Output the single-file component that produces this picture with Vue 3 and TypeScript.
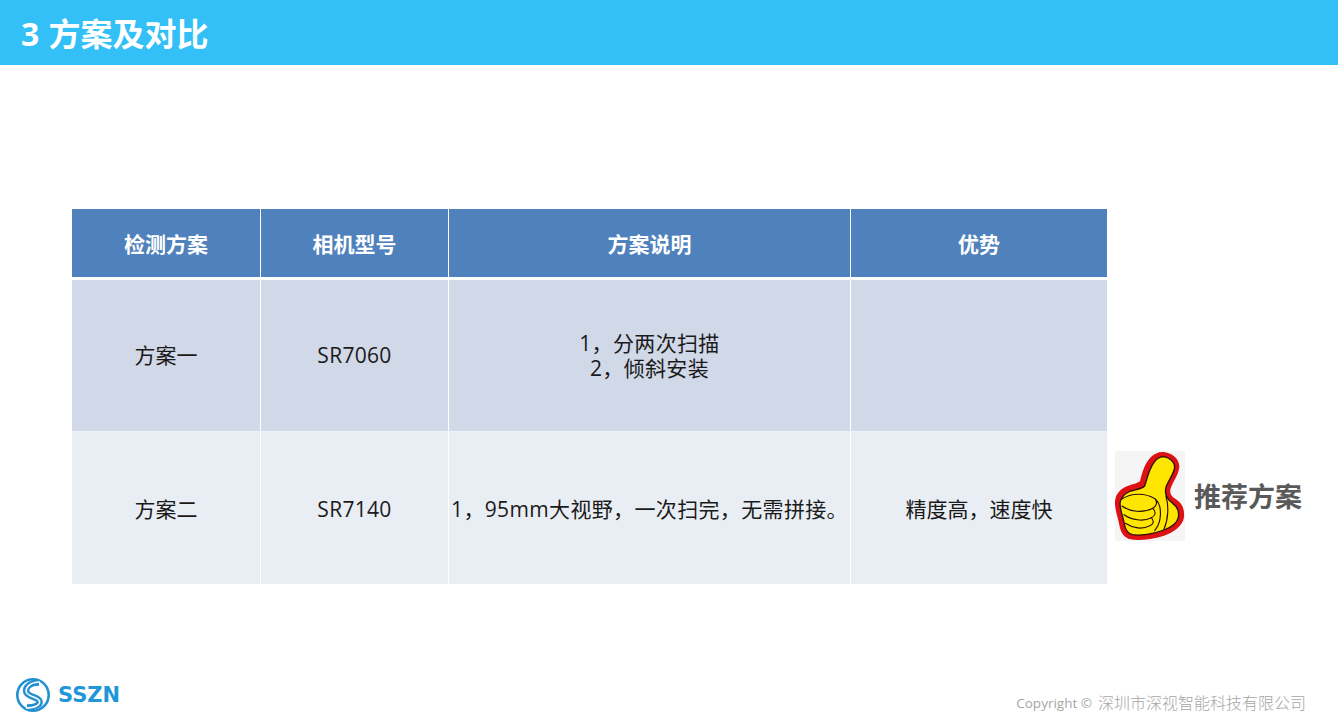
<script setup lang="ts">
interface Row { name: string; model: string; desc: string[]; adv: string; cls: string }
const heads: string[] = ['检测方案', '相机型号', '方案说明', '优势']
const rows: Row[] = [
  { name: '方案一', model: 'SR7060', desc: ['1，分两次扫描', '2，倾斜安装'], adv: '', cls: 'r1' },
  { name: '方案二', model: 'SR7140', desc: ['1，95mm大视野，一次扫完，无需拼接。'], adv: '精度高，速度快', cls: 'r2' },
]
</script>

<template>
  <div class="page">
    <header class="bar"><h1>3 方案及对比</h1></header>
    <main class="main">
      <section class="table">
        <div class="row head">
          <div v-for="h in heads" :key="h" class="cell">{{ h }}</div>
        </div>
        <div v-for="r in rows" :key="r.name" class="row body" :class="r.cls">
          <div class="cell">{{ r.name }}</div>
          <div class="cell model">{{ r.model }}</div>
          <div class="cell desc"><span v-for="d in r.desc" :key="d">{{ d }}</span></div>
          <div class="cell">{{ r.adv }}</div>
        </div>
      </section>
      <aside class="rec">
        <svg class="thumb" width="70" height="90" viewBox="45 33 210 270">
          <rect x="45" y="33" width="210" height="270" fill="#f5f5f5" />
          <path d="M190 36 C215 38 238 55 238 80 C236 105 218 125 212 145 C208 158 212 168 228 178 C248 190 254 210 252 232 C248 258 222 278 190 288 C155 298 115 303 92 298 C72 294 62 278 58 255 C54 232 44 210 45 185 C47 160 62 145 85 137 C98 133 112 130 120 124 C126 100 134 70 152 52 C163 41 176 35 190 36 Z" fill="#dc1214" />
          <path d="M190 50 C208 52 224 65 224 82 C222 102 204 122 198 142 C193 160 198 175 218 190 C232 200 238 215 235 232 C232 250 212 262 192 270 C160 282 120 288 98 284 C84 281 76 270 73 252 C70 232 60 212 60 190 C62 172 75 160 92 153 C108 148 124 148 134 138 C142 115 146 90 160 70 C168 58 178 50 190 50 Z" fill="#ffe600" stroke="#2a0f06" stroke-width="4" />
          <path d="M64 178 C95 158 135 158 165 176 C174 188 168 200 158 205 M66 198 C90 216 130 220 158 205 C170 216 166 228 154 233 M72 224 C95 240 130 246 154 233 C164 244 160 254 148 258 M76 250 C100 266 128 268 148 258 M165 176 C180 190 184 210 180 236 C178 250 172 262 164 272 M198 170 C206 195 206 235 192 268" fill="none" stroke="#2a0f06" stroke-width="3.5" stroke-linecap="round" />
        </svg>
        <strong>推荐方案</strong>
      </aside>
    </main>
    <footer class="foot">
      <div class="logo">
        <svg width="36" height="36" viewBox="0 0 36 36">
          <circle cx="18" cy="18" r="15.7" fill="none" stroke="#2390d2" stroke-width="2.6" />
          <path d="M24 5.5 C15 5.5 9.5 10.5 11.5 15.5 C13.5 20 23 20 24.5 24 C25.5 28 20 30.5 12 30.5" fill="none" stroke="#2390d2" stroke-width="6.4" />
          <path d="M25 5 C15 5 10 10.5 11.5 15.5 C13.5 20 23 20 24.5 24 C25.5 28 20 31 11 31" fill="none" stroke="#fff" stroke-width="1.6" />
        </svg>
        <span>SSZN</span>
      </div>
      <small><span class="lat">Copyright ©</span><span class="cjk">深圳市深视智能科技有限公司</span></small>
    </footer>
  </div>
</template>

<style scoped>
.page {
  width: 1338px;
  height: 720px;
  display: flex;
  flex-direction: column;
  overflow: hidden;
  background: #fff;
  font-family: "Open Sans", "Noto Sans CJK SC", sans-serif;
}
.bar {
  height: 65px;
  flex: none;
  background: #33c0f6;
  display: flex;
  align-items: center;
  padding: 3px 0 0 21px;
  box-sizing: border-box;
}
.bar h1 {
  margin: 0;
  font-size: 32px;
  font-weight: 700;
  line-height: 1;
  color: #fff;
  word-spacing: 1px;
}
.main {
  flex: 1;
  display: flex;
  align-items: flex-start;
  padding: 144px 0 0 72px;
}
.table {
  width: 1035px;
  flex: none;
  display: flex;
  flex-direction: column;
}
.row {
  display: grid;
  grid-template-columns: 188px 188px 402px 257px;
}
.cell {
  display: flex;
  flex-direction: column;
  align-items: center;
  justify-content: center;
  text-align: center;
  border-left: 1px solid #fff;
  color: #1a1a1a;
  font-size: 21px;
  line-height: 25px;
  white-space: nowrap;
}
.cell:first-child { border-left: 0; }
.head {
  height: 68px;
  margin-bottom: 3px;
  background: #4f81bd;
}
.head .cell {
  color: #fff;
  font-weight: 700;
  padding-top: 3px;
}
.body { height: 152px; }
.r1 { background: #d1d8e7; height: 151px; border-bottom: 1px solid #eef1f7; }
.r2 { background: #e9edf4; height: 152px; }
.model { letter-spacing: 0.3px; }
.r1 .model { padding-bottom: 1px; }
.r1 .desc { padding-top: 1px; }
.desc { letter-spacing: 0.35px; }
.r2 .cell { padding-top: 2px; }
.rec {
  margin: 242px 0 0 8px;
  display: flex;
  align-items: center;
  gap: 9px;
}
.thumb { display: block; flex: none; }
.rec strong {
  font-size: 27px;
  line-height: 1;
  font-weight: 700;
  color: #595959;
  white-space: nowrap;
}
.foot {
  height: 50px;
  flex: none;
  display: flex;
  align-items: center;
  justify-content: space-between;
  padding: 0 32px 0 15px;
}
.logo {
  display: flex;
  align-items: center;
  gap: 7px;
}
.logo svg { display: block; }
.logo span {
  font-family: "DejaVu Sans", sans-serif;
  font-weight: 700;
  font-size: 21px;
  line-height: 1;
  color: #1f96d8;
}
.foot small {
  display: flex;
  gap: 6px;
  align-items: center;
  line-height: 20px;
  color: #a6a6a6;
  margin-top: 16px;
}
.lat { font-size: 13.5px; }
.cjk { font-size: 16px; font-weight: 300; }
</style>
